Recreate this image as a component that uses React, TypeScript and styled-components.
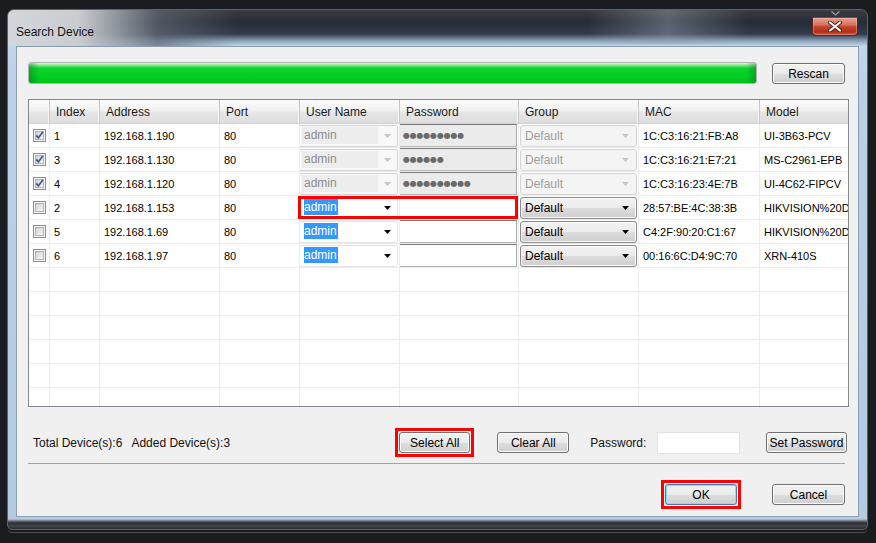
import styled, { createGlobalStyle, css } from 'styled-components'

const GlobalStyle = createGlobalStyle`
  html, body { margin: 0; padding: 0; background: #1b1c20; }
  body { font-family: "Liberation Sans", Arial, sans-serif; font-size: 12px; color: #000; }
  * { box-sizing: border-box; }
`

const Screen = styled.div`
  width: 876px;
  height: 543px;
  padding: 9px 8px 0 7px;
  background: #1b1c20;
  overflow: hidden;
`

const Window = styled.div`
  width: 861px;
  height: 521px;
  display: flex;
  flex-direction: column;
  border: 1px solid #5e6166;
  border-radius: 7px 7px 5px 5px;
  background:
    linear-gradient(90deg, #d3d6da 0, #c9cdd2 70px, rgba(96, 104, 116, 0.7) 150px, rgba(40, 48, 60, 0) 230px) top left / 100% 36px no-repeat,
    linear-gradient(90deg, rgba(0, 0, 0, 0) 580px, rgba(150, 160, 175, 0.45) 660px, rgba(0, 0, 0, 0) 740px) top left / 100% 34px no-repeat,
    linear-gradient(180deg, #3a3c41 0, #262c36 12px, #323c4b 24px, #8ea4bb 31px, #c3d5e8 36px, #bcd0e6 80px, #b4cae1 calc(100% - 10px), #6a6e75 calc(100% - 8px), #2a2c30 calc(100% - 6px), #45474c calc(100% - 3px), #26282c 100%);
  box-shadow: 0 3px 0 -1px #1b1c20, 0 4px 0 -1px #4a4c50;
`

const TitleBar = styled.div`
  height: 36px;
  display: flex;
  justify-content: space-between;
  align-items: flex-start;
  padding: 0 9px 0 8px;
`

const Title = styled.div`
  padding-top: 14px;
  font-size: 12px;
  line-height: 16px;
  color: #141414;
`

const CloseArea = styled.div`
  display: flex;
  flex-direction: column;
  align-items: center;
`

const Chevron = styled.svg`
  display: block;
  margin: 1px 0 1px;
`

const CloseButton = styled.div`
  width: 46px;
  height: 19px;
  display: flex;
  align-items: center;
  justify-content: center;
  border: 1px solid #5e2219;
  border-top-color: #8a4236;
  border-radius: 0 0 4px 4px;
  background: linear-gradient(180deg, #e6a091 0, #d8735f 40%, #c4412a 52%, #b2301c 82%, #cf5a3f 100%);
  box-shadow: inset 0 0 0 1px rgba(255, 200, 190, 0.35);
`

const Client = styled.div`
  flex: 1;
  margin: 0 8px 12px;
  border: 1px solid #8a9db2;
  background: #f0f0f0;
  padding: 15px 11px 0;
  display: flex;
  flex-direction: column;
`

const TopRow = styled.div`
  display: flex;
  align-items: flex-end;
  gap: 15px;
  padding-right: 2px;
`

const Progress = styled.div`
  width: 731px;
  height: 22px;
  border: 1px solid #b2b2b2;
  border-radius: 3px;
  background: #e6e6e6;
  overflow: hidden;
`

const Fill = styled.div`
  height: 100%;
  background:
    linear-gradient(90deg, rgba(0, 90, 20, 0.35) 0, rgba(0, 0, 0, 0) 10px, rgba(0, 0, 0, 0) calc(100% - 10px), rgba(0, 90, 20, 0.35) 100%),
    linear-gradient(180deg, #e2f9e2 0, #8aea92 2px, #12d430 5px, #00d021 60%, #00c51f 100%);
`

const Button = styled.button<{ $w: number; $default?: boolean; $marked?: boolean }>`
  position: relative;
  width: ${p => p.$w}px;
  height: 21px;
  padding: 0;
  font: 12px "Liberation Sans", Arial, sans-serif;
  color: #000;
  border: 1px solid #707070;
  border-radius: 3px;
  background: linear-gradient(180deg, #f2f2f2 0%, #ebebeb 50%, #dddddd 51%, #cfcfcf 100%);
  box-shadow: inset 0 0 0 1px #fbfbfb;
  flex: none;
  ${p =>
    p.$default &&
    css`
      border-color: #3c7fb1;
      box-shadow: inset 0 0 0 1px #8fd8f8;
    `}
  ${p =>
    p.$marked &&
    css`
      &::after {
        content: '';
        position: absolute;
        inset: -5px;
        border: 3px solid #f00;
        pointer-events: none;
      }
    `}
`

const Table = styled.div`
  margin-top: 15px;
  width: 821px;
  height: 308px;
  border: 1px solid #828790;
  background: #fff;
  overflow: hidden;
`

const COLS = '21px 50px 120px 80px 100px 119px 120px 121px 140px'

const HeaderRow = styled.div`
  display: grid;
  grid-template-columns: ${COLS};
  height: 24px;
  background: linear-gradient(180deg, #fbfbfb 0%, #f2f2f2 45%, #e6e6e6 55%, #dddddd 100%);
  border-bottom: 1px solid #d2d2d2;
`

const HeaderCell = styled.div`
  display: flex;
  align-items: center;
  padding-left: 6px;
  border-right: 1px solid #c8c8c8;
  box-shadow: inset -1px 0 0 #f7f7f7;
  color: #1a1a1a;
  white-space: nowrap;
`

const Row = styled.div`
  display: grid;
  grid-template-columns: ${COLS};
  height: 24px;
  border-bottom: 1px solid #ececec;
`

const Cell = styled.div<{ $ctl?: boolean; $center?: boolean }>`
  display: flex;
  align-items: center;
  justify-content: ${p => (p.$center ? 'center' : 'flex-start')};
  padding: ${p => (p.$ctl ? '0 1px 0 0' : p.$center ? '0' : '0 0 0 4px')};
  border-right: 1px solid #ececec;
  font-size: 11px;
  white-space: nowrap;
  overflow: hidden;
`

const Pair = styled.div<{ $marked?: boolean }>`
  grid-column: span 2;
  display: grid;
  grid-template-columns: 100px 119px;
  position: relative;
  ${p =>
    p.$marked &&
    css`
      &::after {
        content: '';
        position: absolute;
        inset: 0 1px 0 -2px;
        border: 3px solid #f00;
        pointer-events: none;
      }
    `}
`

const Combo = styled.div<{ $off?: boolean }>`
  width: 99px;
  height: 22px;
  margin-left: -1px;
  display: flex;
  align-items: center;
  justify-content: space-between;
  padding: 0 6px 0 2px;
  font-size: 12px;
  border: 1px solid ${p => (p.$off ? '#d3d3d3' : '#e4e4e4')};
  border-radius: 2px;
  background: ${p => (p.$off ? '#f8f8f8' : '#fff')};
`

const ComboText = styled.div<{ $off?: boolean }>`
  width: 76px;
  height: 17px;
  line-height: 17px;
  padding-left: 2px;
  color: #8e8e8e;
  ${p =>
    p.$off
      ? css`
          background: #ededed;
        `
      : css`
          color: #000;
        `}
`

const Selected = styled.span`
  background: #3399ff;
  color: #fff;
  padding: 1px 1px 1px 0;
`

const Pwd = styled.div<{ $off?: boolean }>`
  width: 120px;
  height: 23px;
  margin-left: -1px;
  display: flex;
  align-items: center;
  padding-left: 3px;
  border: 1px solid #7a7a7a;
  border-right-color: #a8a8a8;
  border-bottom-color: #b5b5b5;
  background: ${p => (p.$off ? '#ebebeb' : '#fff')};
  color: #6a6a6a;
  font-family: "DejaVu Sans", sans-serif;
  font-size: 8px;
  letter-spacing: -0.2px;
`

const Group = styled.div<{ $off?: boolean }>`
  width: 118px;
  height: 22px;
  margin-left: 1px;
  display: flex;
  align-items: center;
  justify-content: space-between;
  padding: 0 7px 0 4px;
  font-size: 12px;
  border-radius: 3px;
  ${p =>
    p.$off
      ? css`
          border: 1px solid #d5d5d5;
          background: #f4f4f4;
          color: #9e9e9e;
        `
      : css`
          border: 1px solid #8a8a8a;
          background: linear-gradient(180deg, #f2f2f2 0%, #ebebeb 50%, #dddddd 51%, #cfcfcf 100%);
          box-shadow: inset 0 0 0 1px #fafafa;
          color: #000;
        `}
`

const BottomBar = styled.div`
  margin-top: 25px;
  height: 21px;
  display: flex;
  align-items: center;
`

const Info = styled.div`
  width: 372px;
  padding-left: 5px;
  display: flex;
  gap: 9px;
  color: #111;
`

const Label = styled.div<{ $ml: number; $w: number }>`
  margin-left: ${p => p.$ml}px;
  width: ${p => p.$w}px;
  color: #111;
`

const Spaced = styled.div<{ $ml: number }>`
  margin-left: ${p => p.$ml}px;
  display: flex;
`

const Input = styled.div`
  width: 83px;
  height: 22px;
  background: #fff;
  border: 1px solid #e2e2e2;
`

const Separator = styled.div`
  margin: 10px 2px 0 0;
  height: 1px;
  background: #a3a3a3;
`

const Footer = styled.div`
  margin-top: 20px;
  display: flex;
  justify-content: flex-end;
  gap: 35px;
  padding-right: 2px;
`

const Caret = ({ color }: { color: string }) => (
  <svg width="7" height="4" viewBox="0 0 7 4">
    <path d="M0 0h7L3.5 4z" fill={color} />
  </svg>
)

const CheckBox = ({ checked }: { checked: boolean }) => (
  <svg width="13" height="13" viewBox="0 0 13 13">
    <defs>
      <linearGradient id="cbg" x1="0" y1="0" x2="1" y2="1">
        <stop offset="0" stopColor="#cfd3d8" />
        <stop offset="1" stopColor="#f7f7f7" />
      </linearGradient>
    </defs>
    <rect x="0.5" y="0.5" width="12" height="12" fill="#f4f4f4" stroke="#8e8f8f" />
    <rect x="2.5" y="2.5" width="8" height="8" fill="url(#cbg)" stroke="#aeb3b9" />
    {checked && <path d="M3.2 6.3 L5.4 8.8 L9.8 3" stroke="#4b5f9c" strokeWidth="1.8" fill="none" />}
  </svg>
)

type Device = {
  on: boolean
  idx: number
  addr: string
  pwd: number
  mac: string
  model: string
  added: boolean
  marked?: boolean
}

const devices: Device[] = [
  { on: true, idx: 1, addr: '192.168.1.190', pwd: 9, mac: '1C:C3:16:21:FB:A8', model: 'UI-3B63-PCV', added: true },
  { on: true, idx: 3, addr: '192.168.1.130', pwd: 6, mac: '1C:C3:16:21:E7:21', model: 'MS-C2961-EPB', added: true },
  { on: true, idx: 4, addr: '192.168.1.120', pwd: 10, mac: '1C:C3:16:23:4E:7B', model: 'UI-4C62-FIPCV', added: true },
  { on: false, idx: 2, addr: '192.168.1.153', pwd: 0, mac: '28:57:BE:4C:38:3B', model: 'HIKVISION%20DS-7608NI', added: false, marked: true },
  { on: false, idx: 5, addr: '192.168.1.69', pwd: 0, mac: 'C4:2F:90:20:C1:67', model: 'HIKVISION%20DS-2CD2032', added: false },
  { on: false, idx: 6, addr: '192.168.1.97', pwd: 0, mac: '00:16:6C:D4:9C:70', model: 'XRN-410S', added: false }
]

const headers = ['', 'Index', 'Address', 'Port', 'User Name', 'Password', 'Group', 'MAC', 'Model']

export default function App() {
  return (
    <Screen>
      <GlobalStyle />
      <Window>
        <TitleBar>
          <Title>Search Device</Title>
          <CloseArea>
            <Chevron width="9" height="5" viewBox="0 0 9 5">
              <path d="M0.5 0.5 L4.5 4 L8.5 0.5" stroke="#9a9ca0" strokeWidth="1.2" fill="none" />
            </Chevron>
            <CloseButton>
              <svg width="14" height="11" viewBox="0 0 14 11">
                <path d="M2 1.5 L12 9.5 M12 1.5 L2 9.5" stroke="#4a1a12" strokeWidth="4" strokeLinecap="round" />
                <path d="M2 1.5 L12 9.5 M12 1.5 L2 9.5" stroke="#fff" strokeWidth="2.2" strokeLinecap="round" />
              </svg>
            </CloseButton>
          </CloseArea>
        </TitleBar>
        <Client>
          <TopRow>
            <Progress>
              <Fill />
            </Progress>
            <Button $w={73}>Rescan</Button>
          </TopRow>
          <Table>
            <HeaderRow>
              {headers.map((h, i) => (
                <HeaderCell key={i}>{h}</HeaderCell>
              ))}
            </HeaderRow>
            {devices.map(d => (
              <Row key={d.idx}>
                <Cell $center>
                  <CheckBox checked={d.on} />
                </Cell>
                <Cell>{d.idx}</Cell>
                <Cell>{d.addr}</Cell>
                <Cell>80</Cell>
                <Pair $marked={d.marked}>
                  <Cell $ctl>
                    <Combo $off={d.added}>
                      <ComboText $off={d.added}>{d.added ? 'admin' : <Selected>admin</Selected>}</ComboText>
                      <Caret color={d.added ? '#c4c4c4' : '#000'} />
                    </Combo>
                  </Cell>
                  <Cell $ctl>
                    <Pwd $off={d.added}>{'●'.repeat(d.pwd)}</Pwd>
                  </Cell>
                </Pair>
                <Cell $ctl>
                  <Group $off={d.added}>
                    Default
                    <Caret color={d.added ? '#c4c4c4' : '#000'} />
                  </Group>
                </Cell>
                <Cell>{d.mac}</Cell>
                <Cell>{d.model}</Cell>
              </Row>
            ))}
            {Array.from({ length: 6 }, (_, i) => (
              <Row key={'e' + i}>
                {headers.map((_h, j) => (
                  <Cell key={j} />
                ))}
              </Row>
            ))}
          </Table>
          <BottomBar>
            <Info>
              <span>Total Device(s):6</span>
              <span>Added Device(s):3</span>
            </Info>
            <Button $w={71} $marked>
              Select All
            </Button>
            <Spaced $ml={27}>
              <Button $w={72}>Clear All</Button>
            </Spaced>
            <Label $ml={21} $w={67}>
              Password:
            </Label>
            <Input />
            <Spaced $ml={26}>
              <Button $w={81}>Set Password</Button>
            </Spaced>
          </BottomBar>
          <Separator />
          <Footer>
            <Button $w={72} $default $marked>
              OK
            </Button>
            <Button $w={73}>Cancel</Button>
          </Footer>
        </Client>
      </Window>
    </Screen>
  )
}
